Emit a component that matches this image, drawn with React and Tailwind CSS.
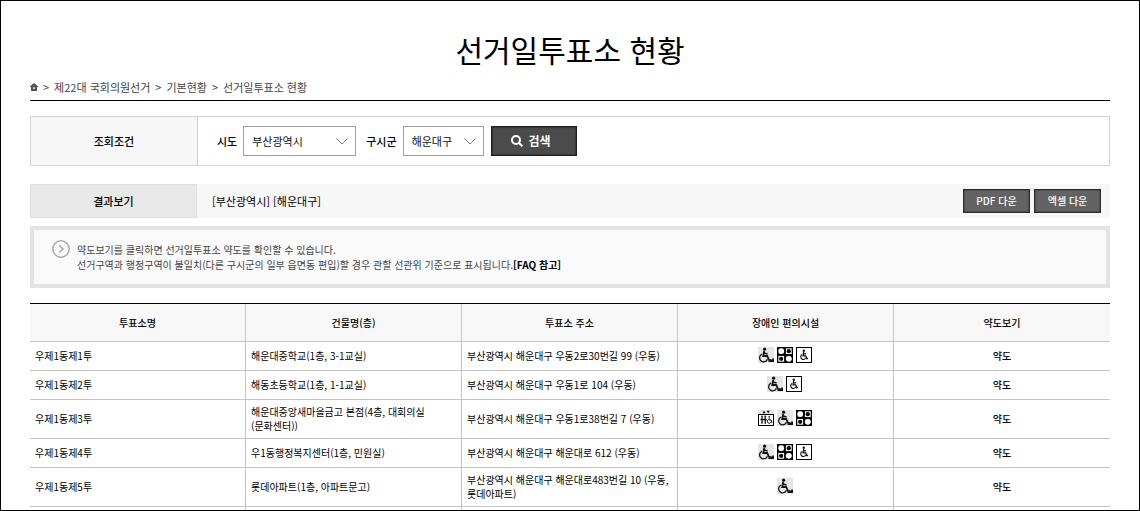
import { useState } from "react";

const FACILITY_LABELS = {
  ramp: "경사로",
  braille: "점자유도블록",
  toilet: "장애인 화장실",
  elevator: "승강기",
};

const stations = [
  {
    name: "우제1동제1투",
    building: "해운대중학교(1층, 3-1교실)",
    address: "부산광역시 해운대구 우동2로30번길 99 (우동)",
    facilities: ["ramp", "braille", "toilet"],
  },
  {
    name: "우제1동제2투",
    building: "해동초등학교(1층, 1-1교실)",
    address: "부산광역시 해운대구 우동1로 104 (우동)",
    facilities: ["ramp", "toilet"],
  },
  {
    name: "우제1동제3투",
    building: "해운대중앙새마을금고 본점(4층, 대회의실 (문화센터))",
    address: "부산광역시 해운대구 우동1로38번길 7 (우동)",
    facilities: ["elevator", "ramp", "braille"],
  },
  {
    name: "우제1동제4투",
    building: "우1동행정복지센터(1층, 민원실)",
    address: "부산광역시 해운대구 해운대로 612 (우동)",
    facilities: ["ramp", "braille", "toilet"],
  },
  {
    name: "우제1동제5투",
    building: "롯데아파트(1층, 아파트문고)",
    address: "부산광역시 해운대구 해운대로483번길 10 (우동, 롯데아파트)",
    facilities: ["ramp"],
  },
];

const columns = ["투표소명", "건물명(층)", "투표소 주소", "장애인 편의시설", "약도보기"];

const FacilityIcon = ({ type }) => (
  <svg className="w-4 h-4" viewBox="0 0 16 16" role="img" aria-label={FACILITY_LABELS[type]}>
    {type === "ramp" && (
      <>
        <rect width="16" height="16" fill="#e6e6e6" />
        <circle cx="6.6" cy="2.2" r="1.6" fill="#111" />
        <path d="m6.2 4-1 5h4l1.8 4 2 .2M6 6l3.6 1" fill="none" stroke="#111" strokeWidth="1.8" />
        <path d="M4 7.2a4 4 0 1 0 5.4 5" fill="none" stroke="#111" strokeWidth="1.3" />
        <path d="M10.5 15v-1.2h2v-1.2h1.8v-1.2H16V15z" fill="#111" />
      </>
    )}
    {type === "braille" && (
      <>
        <rect width="16" height="16" fill="#000" />
        <rect x="1.3" y="1.3" width="5.8" height="5.8" rx="2.4" fill="#fff" />
        <rect x="8.9" y="8.9" width="5.8" height="5.8" rx="2.4" fill="#fff" />
        <rect x="8.9" y="1.3" width="5.8" height="5.8" fill="#fff" />
        <rect x="1.3" y="8.9" width="5.8" height="5.8" fill="#fff" />
        <circle cx="11.8" cy="4.2" r="2.1" fill="#000" />
        <circle cx="4.2" cy="11.8" r="2.1" fill="#000" />
      </>
    )}
    {type === "toilet" && (
      <>
        <rect x=".5" y=".5" width="15" height="15" fill="#fff" stroke="#000" />
        <circle cx="7.8" cy="3.8" r="1.2" fill="#111" />
        <path d="m7.6 5-.5 3.9h2.6l1.2 2.8 1.2-.3M7.5 6.8h2.5" fill="none" stroke="#111" strokeWidth="1.3" />
        <path d="M6 7.5a2.7 2.7 0 1 0 3.8 3.6" fill="none" stroke="#111" strokeWidth="1.1" />
      </>
    )}
    {type === "elevator" && (
      <>
        <rect width="16" height="4" fill="#e6e6e6" />
        <path d="m6 .6 1.6 2.6H4.4zM8.6.8h3.2l-1.6 2.6z" fill="#111" />
        <rect x=".5" y="4.5" width="15" height="11" fill="#fff" stroke="#000" />
        <circle cx="4" cy="6.4" r=".9" fill="#111" />
        <circle cx="7.2" cy="6.4" r=".9" fill="#111" />
        <path d="M4 7.2v6.6M7.2 7.2v6.6M2.4 9.5h6.4" stroke="#111" strokeWidth="1.3" />
        <circle cx="11.2" cy="6.8" r=".8" fill="#111" />
        <path d="M11.2 7.6V10H13l1 3M10.4 9.6a1.9 1.9 0 1 0 2.4 2.8" fill="none" stroke="#111" />
      </>
    )}
  </svg>
);

const SelectBox = ({ id, label, value, onChange, options, className }) => (
  <div className="flex items-center gap-1.5">
    <label htmlFor={id} className="font-medium">
      {label}
    </label>
    <div className="relative">
      <select
        id={id}
        value={value}
        onChange={(e) => onChange(e.target.value)}
        className={`h-[30px] appearance-none border border-[#a0a0a0] bg-white pl-2 pr-5 text-[#111] ${className}`}
      >
        {options.map((option) => (
          <option key={option}>{option}</option>
        ))}
      </select>
      <svg
        className="pointer-events-none absolute right-2 top-3 h-[7px] w-3"
        viewBox="0 0 12 7"
        fill="none"
        stroke="#777"
      >
        <path d="m.5.5 5.5 5.5L11.5.5" />
      </svg>
    </div>
  </div>
);

const DownloadButton = ({ children }) => (
  <button
    type="button"
    className="h-6 w-[67px] border border-[#2b2b2b] bg-[#636363] text-[10px] font-medium text-white shadow-[inset_0_0_2px_#222]"
  >
    {children}
  </button>
);

const App = () => {
  const [city, setCity] = useState("부산광역시");
  const [district, setDistrict] = useState("해운대구");

  return (
    <div
      lang="ko"
      className="h-screen overflow-hidden border border-black bg-white px-[29px] font-['Noto_Sans_CJK_KR',sans-serif] text-[11px] leading-4 text-black"
    >
      <h1 className="mt-[30px] text-center text-[30px] leading-9">선거일투표소 현황</h1>

      {/* Breadcrumb */}
      <nav className="mt-3 flex items-center gap-[5px] border-b border-black pb-[5px] text-[#444]">
        <a href="#" aria-label="홈">
          <svg className="h-2 w-2" viewBox="0 0 8 8" fill="#555">
            <path d="M4 0 0 3.2V4h1v4h6V4h1v-.8zM3.2 4.2h1.6V6H3.2z" fillRule="evenodd" />
          </svg>
        </a>
        <span>&gt;</span>
        <a href="#">제22대 국회의원선거</a>
        <span>&gt;</span>
        <a href="#">기본현황</a>
        <span>&gt;</span>
        <a href="#">선거일투표소 현황</a>
      </nav>

      {/* Search conditions */}
      <form
        className="mt-[15px] flex h-[50px] border border-[#d4d4d4]"
        onSubmit={(e) => e.preventDefault()}
      >
        <div className="flex w-[167px] items-center justify-center border-r border-[#d4d4d4] bg-[#f7f7f7] font-medium">
          조회조건
        </div>
        <div className="flex items-center pl-[19px]">
          <SelectBox
            id="city"
            label="시도"
            value={city}
            onChange={setCity}
            options={["부산광역시"]}
            className="w-[113px]"
          />
          <div className="ml-2.5 mr-[7px]">
            <SelectBox
              id="district"
              label="구시군"
              value={district}
              onChange={setDistrict}
              options={["해운대구"]}
              className="w-[81px]"
            />
          </div>
          <button
            type="submit"
            className="flex h-[30px] w-[86px] items-center justify-center gap-1.5 border border-[#1c1c1c] bg-[#4b4b4b] pr-1.5 text-xs font-bold text-white shadow-[inset_0_0_2px_#111]"
          >
            <svg className="h-3 w-3" viewBox="0 0 12 12" fill="none" stroke="#fff" strokeWidth="2">
              <circle cx="5" cy="5" r="4" />
              <path d="m8 8 3.4 3.4" />
            </svg>
            검색
          </button>
        </div>
      </form>

      {/* Result summary */}
      <div className="mt-[18px] flex h-[34px] items-center bg-[#f7f7f7] pr-[9px]">
        <div className="flex h-full w-[167px] items-center justify-center border border-[#e0e0e0] bg-[#e8e8e8] font-medium">
          결과보기
        </div>
        <p className="ml-[15px] flex-1">[부산광역시] [해운대구]</p>
        <div className="flex gap-1">
          <DownloadButton>PDF 다운</DownloadButton>
          <DownloadButton>엑셀 다운</DownloadButton>
        </div>
      </div>

      {/* Notice */}
      <div className="mt-2 flex h-[62px] gap-[7px] border-4 border-[#e3e3e3] bg-[#fafafa] pl-[18px] pt-2.5 text-[10px] leading-[15px] text-[#444]">
        <svg className="h-[18px] w-[18px]" viewBox="0 0 18 18" fill="none" stroke="#aaa" strokeWidth="1.5">
          <circle cx="9" cy="9" r="8.2" />
          <path d="m7.2 5.5 3.8 3.5-3.8 3.5" />
        </svg>
        <div className="pt-0.5">
          <p>약도보기를 클릭하면 선거일투표소 약도를 확인할 수 있습니다.</p>
          <p>
            선거구역과 행정구역이 불일치(다른 구시군의 일부 읍면동 편입)할 경우 관할 선관위 기준으로 표시됩니다.
            <a href="#" className="font-bold text-black">
              [FAQ 참고]
            </a>
          </p>
        </div>
      </div>

      {/* Polling stations */}
      <table className="mt-[15px] w-full table-fixed border-separate border-spacing-0 break-keep border-t border-black text-[10px] leading-[14px]">
        <thead>
          <tr className="bg-[#f8f8f8]">
            {columns.map((column) => (
              <th
                key={column}
                className="h-[38px] border-b border-r border-[#c4c4c4] p-0 font-medium last:border-r-0"
              >
                {column}
              </th>
            ))}
          </tr>
        </thead>
        <tbody>
          {stations.map((station) => (
            <tr key={station.name}>
              <td className="border-b border-r border-[#c4c4c4] px-[5px]">{station.name}</td>
              <td className="h-[29px] border-b border-r border-[#c4c4c4] px-[5px] py-[5px]">
                {station.building}
              </td>
              <td className="border-b border-r border-[#c4c4c4] px-[5px] py-[5px]">{station.address}</td>
              <td className="border-b border-r border-[#c4c4c4]">
                <div className="flex justify-center gap-[3px] pb-0.5 pr-0.5">
                  {station.facilities.map((type) => (
                    <FacilityIcon key={type} type={type} />
                  ))}
                </div>
              </td>
              <td className="border-b border-[#c4c4c4] text-center">
                <a href="#" className="font-medium">
                  약도
                </a>
              </td>
            </tr>
          ))}
          <tr>
            {columns.map((column) => (
              <td key={column} className="h-[29px] border-b border-r border-[#c4c4c4] last:border-r-0" />
            ))}
          </tr>
        </tbody>
      </table>
    </div>
  );
};

export default App;
